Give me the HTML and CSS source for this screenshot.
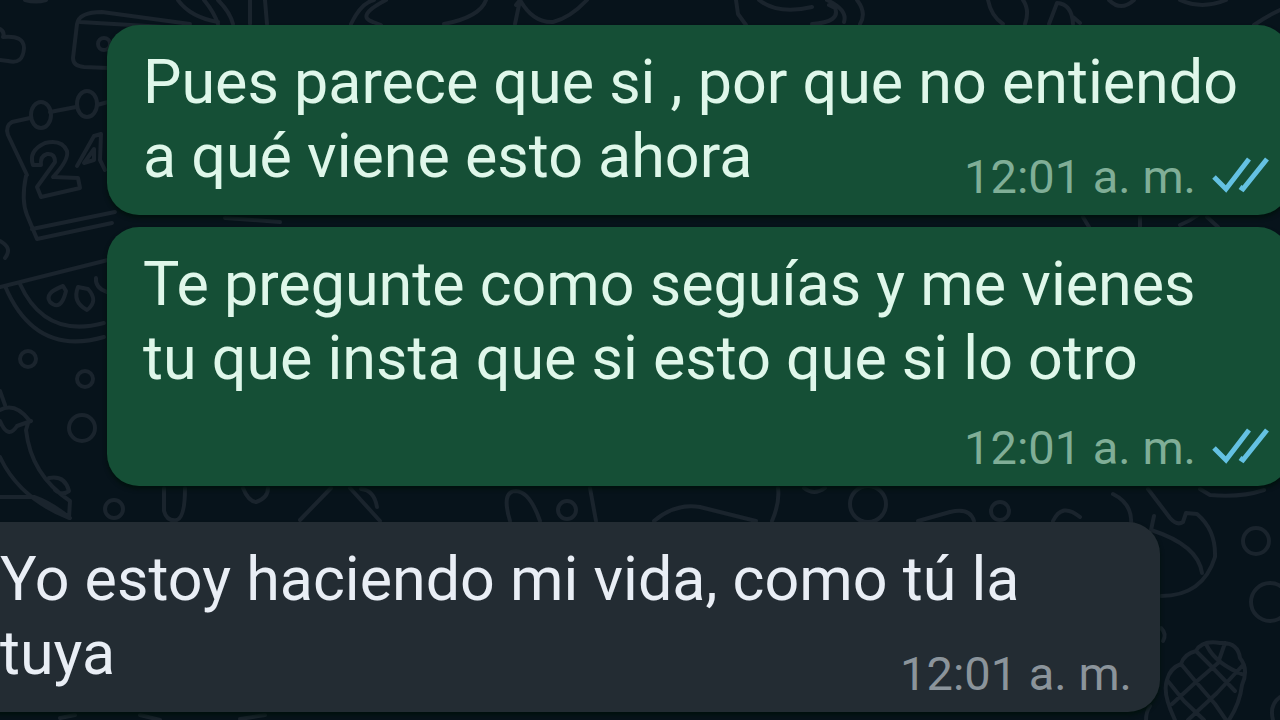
FILE: index.html
```html
<!DOCTYPE html>
<html lang="es">
<head>
<meta charset="utf-8">
<meta name="viewport" content="width=device-width, initial-scale=1">
<title>Chat</title>
<link rel="stylesheet" href="styles.css">
</head>
<body>
<svg class="wallpaper" viewBox="0 0 1280 720" preserveAspectRatio="xMinYMin slice" aria-hidden="true">
  <!-- top strip -->
  <path d="M25 0Q36 3 46 0M0 29Q5 32 3 37Q24 35 24 48Q23 65 8 61L0 60"/>
  <path d="M190 24L102 12Q79 12 77 24L73 58Q73 66 84 67L108 68M80 22L165 27"/>
  <circle cx="104" cy="44" r="6"/>
  <path d="M178 0Q190 17 218 22M204 0Q214 12 218 24M218 0Q230 12 233 24M250 24V0M267 24L265 0M351 24Q361 3 374 0M386 0Q355 16 373 22L381 25M444 24Q480 17 486 0M515 24L520 0Q533 23 553 22Q570 18 587 0M520 0L516 5"/>
  <path d="M736 0L738 14L746 25M759 0Q778 15 812 7M827 0Q848 10 844 22M812 24Q841 22 835 8L829 5M857 0Q867 13 860 24M988 0Q991 16 1003 24M1023 0Q1030 10 1025 24M1049 24L1057 3Q1072 4 1073 24M1073 17L1080 23M1109 0Q1121 12 1134 0M1180 0Q1202 10 1226 0M1254 25Q1267 16 1280 10"/>
  <!-- calendar -->
  <path d="M30 118L12 122Q5 126 8 135L27 175M50 112L76 107M97 105L108 102M26 176Q21 200 27 215L37 239L112 223M32 229L115 212"/>
  <ellipse cx="41" cy="115" rx="10" ry="13"/>
  <ellipse cx="87" cy="104" rx="10" ry="13"/>
  <path d="M33 165Q28 151 45 143Q62 139 67 151Q69 160 53 177L78 178L80 188L41 197L37 187L55 162Q55 153 47 154Q40 156 41 165ZM77 166L94 136L101 134L100 160L105 170M84 163L94 149V160Z"/>
  <!-- gap between the sent bubbles -->
  <path d="M225 218L280 222M1083 217L1089 227M1140 217V227M1180 225Q1190 221 1198 215M1207 217L1218 227"/>
  <!-- watermelon slice -->
  <path d="M0 241Q13 248 5 258M0 287L108 260M5 286Q35 357 104 337M20 284Q45 339 104 323"/>
  <path d="M63 286Q44 293 50 302Q61 312 66 291ZM78 287Q72 302 87 310Q99 301 88 289ZM96 278Q95 288 107 292"/>
  <circle cx="28" cy="359" r="8"/><circle cx="85" cy="379" r="8"/><circle cx="82" cy="428" r="13"/><circle cx="114" cy="509" r="9"/>
  <!-- chilli pepper -->
  <path d="M0 391L5 405M0 410Q15 402 29 420L26 430Q31 475 70 501L69 518Q19 498 0 457M0 421Q8 440 17 426L31 421M0 497H34Q51 503 70 518M49 478Q65 475 69 491Q62 496 55 490"/>
  <!-- strip above the received bubble -->
  <path d="M164 488V511Q167 522 177 520Q185 517 185 488M243 488Q248 501 256 502Q268 498 268 488M300 520L331 488M350 488L380 521M361 489Q374 490 377 507M510 521Q501 491 516 491Q530 492 540 521M590 488L596 521M654 521Q675 503 700 507L756 521M772 521Q780 502 778 488M804 488Q814 496 825 488M918 521L950 512Q970 507 974 521M1053 521Q1062 502 1080 517"/>
  <circle cx="567" cy="510" r="9"/><circle cx="868" cy="504" r="18"/><circle cx="1000" cy="511" r="9"/>
  <!-- flame -->
  <path d="M1113 494Q1133 504 1131 525M1148 489L1170 518Q1177 526 1183 522L1186 513L1197 514Q1216 530 1215 557Q1203 596 1161 596M1154 516L1151 530Q1198 545 1202 573M1200 489L1210 495Q1240 498 1264 490"/>
  <circle cx="1256" cy="541" r="13"/><circle cx="1270" cy="602" r="19"/>
  <path d="M1161 628Q1167 634 1163 641"/>
  <!-- pinecone -->
  <path d="M1175 720Q1162 693 1167 680Q1170 668 1181 664Q1184 654 1196 651Q1202 640 1220 643Q1238 642 1240 658Q1249 669 1242 685Q1240 703 1229 720M1181 664L1196 682L1215 704L1226 720M1196 651L1211 666L1235 691M1207 646Q1216 664 1244 675M1167 680L1184 701L1204 720M1172 704L1196 682L1218 663L1225 643M1188 720L1217 693L1243 665M1280 697Q1269 705 1273 720M1150 706Q1146 712 1146 720"/>
  <path d="M60 718L75 715M140 715L160 720M240 719L265 715"/>
</svg>

<main class="chat">
  <article class="bubble bubble--sent">
    <p class="text">Pues parece que si , por que no entiendo<br>a qué viene esto ahora
      <span class="meta"><time>12:01 a. m.</time>
        <svg class="ticks" viewBox="0 0 58 40" role="img" aria-label="Leído"><path d="M2 20L14 32L37 2M28 30L31 32L55 2"/></svg></span></p>
  </article>
  <article class="bubble bubble--sent">
    <p class="text">Te pregunte como seguías y me vienes<br>tu que insta que si esto que si lo otro
      <span class="meta meta--below"><time>12:01 a. m.</time>
        <svg class="ticks" viewBox="0 0 58 40" role="img" aria-label="Leído"><path d="M2 20L14 32L37 2M28 30L31 32L55 2"/></svg></span></p>
  </article>
  <article class="bubble bubble--received">
    <p class="text">Yo estoy haciendo mi vida, como tú la<br>tuya
      <span class="meta"><time>12:01 a. m.</time></span></p>
  </article>
</main>
</body>
</html>
```

FILE: styles.css
```css
* {
  box-sizing: border-box;
}

body {
  margin: 0;
  min-height: 100vh;
  background: #07131b;
  font-family: Roboto, "Noto Sans", sans-serif;
  overflow: hidden;
}

.wallpaper {
  position: absolute;
  inset: 0;
  width: 100%;
  height: 100%;
  fill: none;
  stroke: #1a242d;
  stroke-width: 4;
  stroke-linecap: round;
  stroke-linejoin: round;
}

.chat {
  position: relative;
  display: flex;
  flex-direction: column;
  gap: 12px;
  padding-top: 25px;
}

.bubble {
  display: flow-root;
  padding: 20px 20px 10px 36px;
  border-radius: 32px;
  box-shadow: 0 3px 4px #00110d;
}

/* Bubbles run slightly past the edge of the screen. */
.bubble--sent {
  margin-left: 107px;
  margin-right: -10px;
  background: #154f36;
  color: #dff7ea;
}

.bubble--received {
  margin-top: 24px;
  margin-left: -36px;
  margin-right: 120px;
  padding-right: 28px;
  background: #232c33;
  color: #e9eef5;
}

.text {
  margin: 0;
  font-size: 61px;
  line-height: 74px;
}

.meta {
  float: right;
  display: flex;
  align-items: center;
  gap: 16px;
  margin-top: 30px;
  font-size: 47px;
  line-height: 56px;
  color: #80ae97;
}

.meta--below {
  margin-top: 25px;
}

.bubble--received .meta {
  color: #8b949b;
}

.ticks {
  width: 58px;
  height: 40px;
  fill: none;
  stroke: #64c1e2;
  stroke-width: 5;
}
```
